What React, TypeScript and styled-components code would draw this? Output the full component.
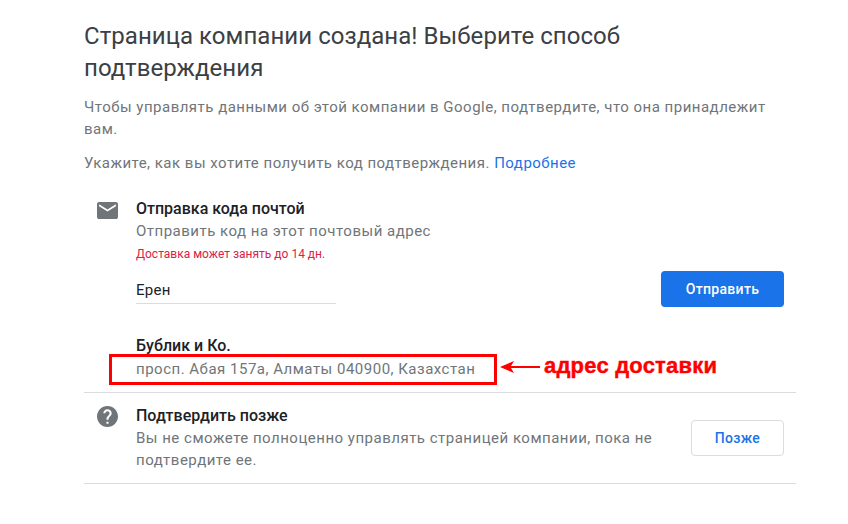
import React from "react";
import styled, { createGlobalStyle } from "styled-components";

const Global = createGlobalStyle`
  html, body { margin: 0; padding: 0; background: #fff; }
  body { font-family: Roboto, "Liberation Sans", sans-serif; }
`;
const Page = styled.div`
  position: relative;
  width: 848px;
  height: 524px;
  box-sizing: border-box;
  padding: 20px 52px 0 84px;
  overflow: hidden;
`;
const Title = styled.h1`
  margin: 0;
  font-size: 24px;
  line-height: 32px;
  font-weight: 400;
  color: #3c4043;
  letter-spacing: 0.05px;
`;
const Lead = styled.p<{ $top: number }>`
  margin: ${(p) => p.$top}px 0 0;
  font-size: 15px;
  line-height: 22px;
  letter-spacing: 0.49px;
  color: #70757a;
`;
const Link = styled.a`
  color: #1a73e8;
`;
const Row = styled.section<{ $first?: boolean }>`
  display: grid;
  grid-template-columns: 52px 1fr auto;
  border-bottom: 1px solid #dadce0;
  padding: ${(p) => (p.$first ? "0" : "12px 0")};
  margin-top: ${(p) => (p.$first ? "24px" : "0")};
`;
const IconCell = styled.div`
  color: #70757a;
  padding-left: 13px;
`;
const MailIcon = styled.svg`
  display: block;
  width: 21px;
  height: 17px;
  margin-top: 4px;
`;
const HelpIcon = styled.svg`
  display: block;
  width: 21px;
  height: 21px;
  margin-top: 1px;
`;
const Body = styled.div`
  min-width: 0;
`;
const Heading = styled.div`
  font-size: 16px;
  line-height: 22px;
  font-weight: 500;
  color: #202124;
`;
const Sub = styled.div<{ $gap?: number }>`
  margin-top: ${(p) => p.$gap ?? 0}px;
  font-size: 15px;
  line-height: 22px;
  color: #70757a;
  letter-spacing: 0.5px;
`;
const Warn = styled.div`
  font-size: 12px;
  line-height: 16px;
  margin-top: 4px;
  color: #dc2145;
`;
const NameField = styled.div`
  width: 200px;
  margin-top: 11px;
  height: 31px;
  box-sizing: border-box;
  border-bottom: 1px solid #dadce0;
  font-size: 15px;
  line-height: 24px;
  letter-spacing: 0.3px;
  color: #202124;
  padding-top: 5px;
`;
const Button = styled.button<{ $primary?: boolean }>`
  font-family: Roboto, "Liberation Sans", sans-serif;
  font-size: 14px;
  font-weight: 500;
  height: 36px;
  border-radius: 4px;
  cursor: pointer;
  letter-spacing: 0.3px;
  padding: 0;
  width: ${(p) => (p.$primary ? 123 : 93)}px;
  color: ${(p) => (p.$primary ? "#fff" : "#1a73e8")};
  background: ${(p) => (p.$primary ? "#1a73e8" : "#fff")};
  border: ${(p) => (p.$primary ? "none" : "1px solid #dadce0")};
`;
const ActionCell = styled.div<{ $top: number }>`
  padding: ${(p) => p.$top}px 12px 0 0;
`;
const Address = styled.div`
  margin-top: 31px;
  padding-bottom: 12px;
`;
const Highlight = styled.div`
  position: absolute;
  left: 109px;
  top: 354px;
  width: 388px;
  height: 31px;
  box-sizing: border-box;
  border: 3px solid #f00;
`;
const Arrow = styled.svg`
  position: absolute;
  left: 500px;
  top: 360px;
`;
const Note = styled.div`
  position: absolute;
  left: 544px;
  top: 354px;
  font-family: "Liberation Sans", Arial, sans-serif;
  font-weight: 700;
  font-size: 22px;
  line-height: 24px;
  letter-spacing: 0.2px;
  color: #f00;
  -webkit-text-stroke: 0.4px #f00;
  white-space: nowrap;
`;

export default function App() {
  return (
    <Page>
      <Global />
      <Title>Страница компании создана! Выберите способ подтверждения</Title>
      <Lead $top={12}>
        Чтобы управлять данными об этой компании в Google, подтвердите, что она принадлежит вам.
      </Lead>
      <Lead $top={12}>
        Укажите, как вы хотите получить код подтверждения. <Link>Подробнее</Link>
      </Lead>
      <Row $first>
        <IconCell>
          <MailIcon viewBox="2 4 20 16" preserveAspectRatio="none">
            <path fill="currentColor" d="M20 4H4c-1.1 0-2 .9-2 2v12c0 1.1.9 2 2 2h16c1.1 0 2-.9 2-2V6c0-1.1-.9-2-2-2zm0 4-8 5-8-5V6l8 5 8-5v2z" />
          </MailIcon>
        </IconCell>
        <Body>
          <Heading>Отправка кода почтой</Heading>
          <Sub>Отправить код на этот почтовый адрес</Sub>
          <Warn>Доставка может занять до 14 дн.</Warn>
          <NameField>Ерен</NameField>
          <Address>
            <Heading>Бублик и Ко.</Heading>
            <Sub $gap={1}>просп. Абая 157а, Алматы 040900, Казахстан</Sub>
          </Address>
        </Body>
        <ActionCell $top={73}>
          <Button $primary>Отправить</Button>
        </ActionCell>
      </Row>
      <Row>
        <IconCell>
          <HelpIcon viewBox="2 2 20 20">
            <path fill="currentColor" d="M12 2C6.48 2 2 6.48 2 12s4.48 10 10 10 10-4.48 10-10S17.52 2 12 2zm1 17h-2v-2h2v2zm2.07-7.75-.9.92C13.45 12.9 13 13.5 13 15h-2v-.5c0-1.1.45-2.1 1.17-2.83l1.24-1.26c.37-.36.59-.86.59-1.41 0-1.1-.9-2-2-2s-2 .9-2 2H8c0-2.21 1.79-4 4-4s4 1.79 4 4c0 .88-.36 1.68-.93 2.25z" />
          </HelpIcon>
        </IconCell>
        <Body>
          <Heading>Подтвердить позже</Heading>
          <Sub>
            Вы не сможете полноценно управлять страницей компании, пока не подтвердите ее.
          </Sub>
        </Body>
        <ActionCell $top={15}>
          <Button>Позже</Button>
        </ActionCell>
      </Row>
      <Highlight />
      <Arrow width="42" height="14" viewBox="0 0 42 14">
        <path fill="#f00" d="M0 7 14 1 11 6H40V8H11L14 13Z" />
      </Arrow>
      <Note>адрес доставки</Note>
    </Page>
  );
}
